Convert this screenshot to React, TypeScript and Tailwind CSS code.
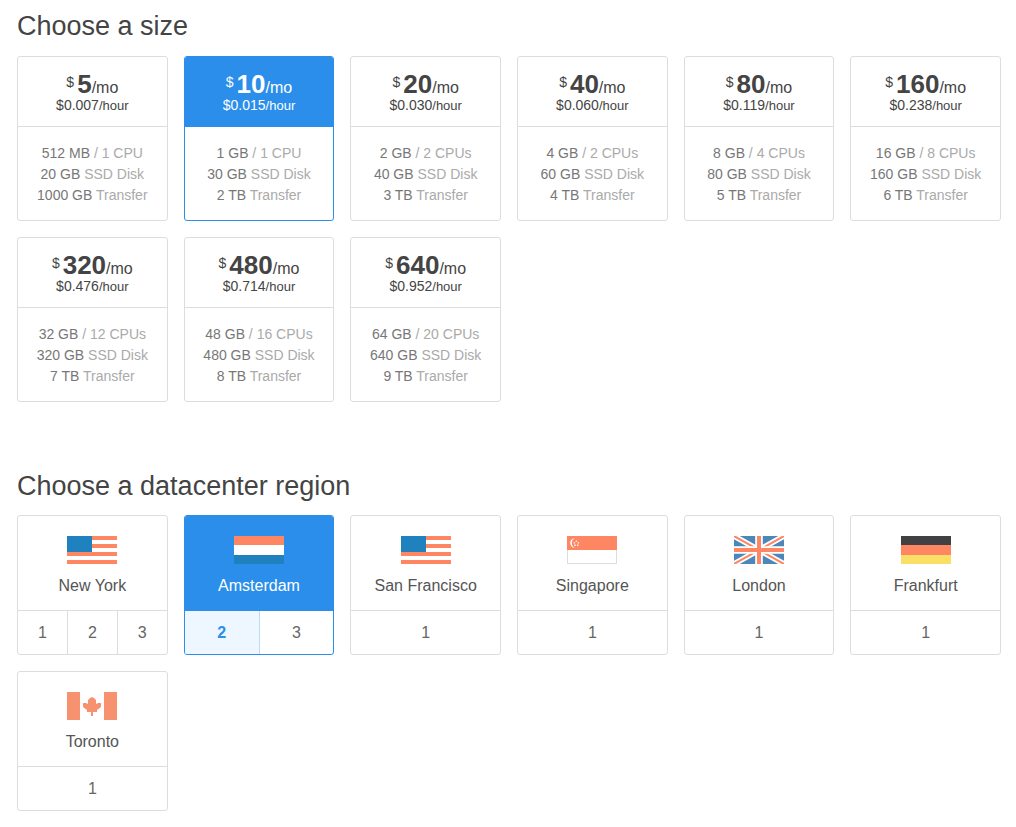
import { useState, type ReactNode } from 'react';

type Size = { price: string; hourly: string; memory: string; cpu: string; disk: string; transfer: string };

const sizes: Size[] = [
  { price: '5', hourly: '0.007', memory: '512 MB', cpu: '1 CPU', disk: '20 GB', transfer: '1000 GB' },
  { price: '10', hourly: '0.015', memory: '1 GB', cpu: '1 CPU', disk: '30 GB', transfer: '2 TB' },
  { price: '20', hourly: '0.030', memory: '2 GB', cpu: '2 CPUs', disk: '40 GB', transfer: '3 TB' },
  { price: '40', hourly: '0.060', memory: '4 GB', cpu: '2 CPUs', disk: '60 GB', transfer: '4 TB' },
  { price: '80', hourly: '0.119', memory: '8 GB', cpu: '4 CPUs', disk: '80 GB', transfer: '5 TB' },
  { price: '160', hourly: '0.238', memory: '16 GB', cpu: '8 CPUs', disk: '160 GB', transfer: '6 TB' },
  { price: '320', hourly: '0.476', memory: '32 GB', cpu: '12 CPUs', disk: '320 GB', transfer: '7 TB' },
  { price: '480', hourly: '0.714', memory: '48 GB', cpu: '16 CPUs', disk: '480 GB', transfer: '8 TB' },
  { price: '640', hourly: '0.952', memory: '64 GB', cpu: '20 CPUs', disk: '640 GB', transfer: '9 TB' },
];

function Flag({ children }: { children: ReactNode }) {
  return (
    <svg width="50" height="28" viewBox="0 0 50 28" aria-hidden="true">
      {children}
    </svg>
  );
}

const usa = (
  <Flag>
    <path fill="#fff" d="M0 0h50v28H0z" />
    <path fill="#ff8663" d="M0 0h50v4H0zM0 8h50v4H0zM0 16h50v4H0zM0 24h50v4H0z" />
    <path fill="#1f82bf" d="M0 0h25v16H0z" />
  </Flag>
);

const netherlands = (
  <Flag>
    <path fill="#ff8663" d="M0 0h50v9H0z" />
    <path fill="#fff" d="M0 9h50v10H0z" />
    <path fill="#1f82bf" d="M0 19h50v9H0z" />
  </Flag>
);

const singapore = (
  <Flag>
    <path fill="#fff" stroke="#ddd" d="M.5 .5h49v27H.5z" />
    <path fill="#ff8663" d="M0 0h50v14H0z" />
    <path fill="#fff" d="M8 2.2A4.8 4.8 0 1 0 8 11.8A5.2 5.2 0 0 1 8 2.2z" />
    <path fill="#fff" d="M8.7 4.4h1.4v1.4H8.7zM6.7 6.2h1.4v1.4H6.7zM10.7 6.2h1.4v1.4h-1.4zM7.3 8.5h1.4v1.4H7.3zM10 8.5h1.4v1.4H10z" />
  </Flag>
);

const uk = (
  <Flag>
    <path fill="#4b87b8" d="M0 0h50v28H0z" />
    <path stroke="#fff" strokeWidth="5.6" d="M0 0l50 28M50 0L0 28" />
    <path stroke="#ff8663" strokeWidth="2" d="M0 0l50 28M50 0L0 28" />
    <path fill="#fff" d="M21.2 0h7.6v28h-7.6zM0 10.3h50v7.4H0z" />
    <path fill="#ff8663" d="M23 0h4v28h-4zM0 12h50v4H0z" />
  </Flag>
);

const germany = (
  <Flag>
    <path fill="#414042" d="M0 0h50v9H0z" />
    <path fill="#ff8663" d="M0 9h50v10H0z" />
    <path fill="#f9df66" d="M0 19h50v9H0z" />
  </Flag>
);

const canada = (
  <Flag>
    <path fill="#f6926f" d="M0 0h13v28H0zM37 0h13v28H37z" />
    <path
      fill="#f6926f"
      d="M25 5l2 1 2 2v4l2-1h3v4l-2 1.5-2 1.5v2h-4v4h-2v-4h-4v-2l-2-1.5-2-1.5v-4h3l2 1V8l2-2z"
    />
  </Flag>
);

const regions: { name: string; flag: ReactNode; zones: number[] }[] = [
  { name: 'New York', flag: usa, zones: [1, 2, 3] },
  { name: 'Amsterdam', flag: netherlands, zones: [2, 3] },
  { name: 'San Francisco', flag: usa, zones: [1] },
  { name: 'Singapore', flag: singapore, zones: [1] },
  { name: 'London', flag: uk, zones: [1] },
  { name: 'Frankfurt', flag: germany, zones: [1] },
  { name: 'Toronto', flag: canada, zones: [1] },
];

function SizeCard({ size, selected, onSelect }: { size: Size; selected: boolean; onSelect: () => void }) {
  return (
    <button
      type="button"
      aria-pressed={selected}
      onClick={onSelect}
      className={`flex cursor-pointer flex-col overflow-hidden rounded-[3px] border bg-white text-center ${selected ? 'border-[#2a8eea]' : 'border-[#ddd]'}`}
    >
      <span
        className={`block w-full border-b pt-3 pb-[14px] ${selected ? 'border-[#2a8eea] bg-[#2a8eea] text-white' : 'border-[#ddd] text-[#444]'}`}
      >
        <span className="flex h-[30px] items-start justify-center leading-[30px]">
          <span className="mr-[3px] text-[14px] leading-[26px]">$</span>
          <span>
            <strong className="text-[26px] font-bold">{size.price}</strong>
            <span className="text-[16px] leading-4">/mo</span>
          </span>
        </span>
        <span className="block text-[14px] leading-[13px]">
          ${size.hourly}
          <span className="text-[13px]">/hour</span>
        </span>
      </span>
      <span className="block w-full pt-4 pb-[14px] text-[14px] leading-[21px] text-[#aaa]">
        <span className="block">
          <span className="text-[#777]">{size.memory}</span> / {size.cpu}
        </span>
        <span className="block">
          <span className="text-[#777]">{size.disk}</span> SSD Disk
        </span>
        <span className="block">
          <span className="text-[#777]">{size.transfer}</span> Transfer
        </span>
      </span>
    </button>
  );
}

export default function App() {
  const [size, setSize] = useState('10');
  const [region, setRegion] = useState({ name: 'Amsterdam', zone: 2 });

  return (
    <main className="bg-white pt-2 pr-[15px] pb-4 pl-[17px] font-['Liberation_Sans',Arial,sans-serif] text-[#444]">
      <section>
        <h2 className="mb-3 text-[27px] leading-9">Choose a size</h2>
        <div className="grid grid-cols-2 gap-4 md:grid-cols-6">
          {sizes.map((s) => (
            <SizeCard key={s.price} size={s} selected={s.price === size} onSelect={() => setSize(s.price)} />
          ))}
        </div>
      </section>

      <section className="mt-[66px]">
        <h2 className="mb-[11px] text-[27px] leading-9">Choose a datacenter region</h2>
        <div className="grid grid-cols-2 gap-4 md:grid-cols-6">
          {regions.map((r) => {
            const selected = r.name === region.name;
            return (
              <div
                key={r.name}
                className={`overflow-hidden rounded-[3px] border bg-white ${selected ? 'border-[#2a8eea]' : 'border-[#ddd]'}`}
              >
                <button
                  type="button"
                  aria-pressed={selected}
                  onClick={() => setRegion({ name: r.name, zone: r.zones[0] })}
                  className={`flex w-full cursor-pointer flex-col items-center gap-3 border-b pt-5 pb-[14px] text-[16px] leading-5 ${selected ? 'border-[#2a8eea] bg-[#2a8eea] text-white' : 'border-[#ddd] text-[#555]'}`}
                >
                  {r.flag}
                  {r.name}
                </button>
                <div className={`flex divide-x ${selected ? 'divide-[#b9dcfa]' : 'divide-[#ddd]'}`}>
                  {r.zones.map((z) => {
                    const active = selected && z === region.zone;
                    return (
                      <button
                        key={z}
                        type="button"
                        aria-label={`${r.name} ${z}`}
                        aria-pressed={active}
                        onClick={() => setRegion({ name: r.name, zone: z })}
                        className={`h-[43px] flex-1 cursor-pointer text-[16px] ${active ? 'bg-[#eef6ff] font-bold text-[#2a8eea]' : 'text-[#666]'}`}
                      >
                        {z}
                      </button>
                    );
                  })}
                </div>
              </div>
            );
          })}
        </div>
      </section>
    </main>
  );
}
